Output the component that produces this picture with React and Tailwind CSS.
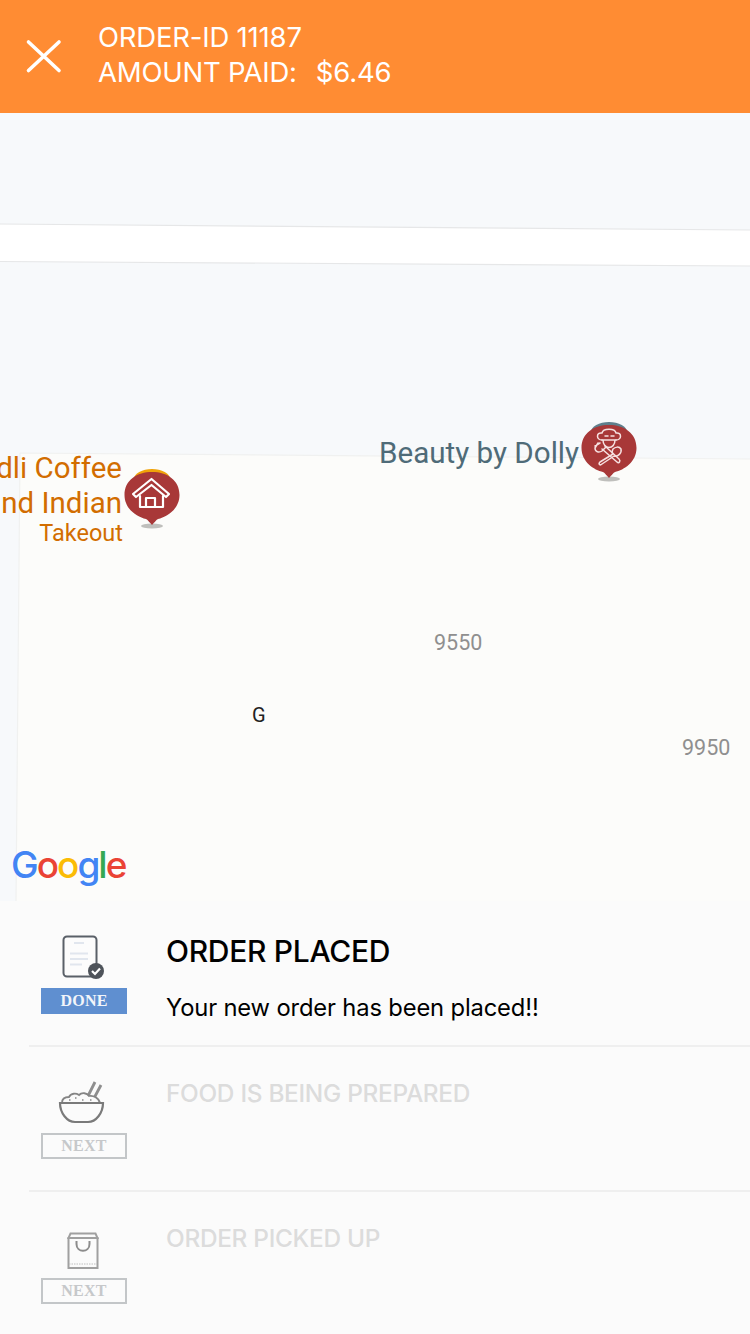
const sans = { fontFamily: 'Inter, Lato, sans-serif' };
const map = { fontFamily: 'Roboto, sans-serif' };

function Pin({ top, children }) {
  return (
    <svg width="58" height="62" viewBox="0 0 58 62" className="block">
      <ellipse cx="29" cy="59" rx="11" ry="2.6" fill="#b4b4b0" opacity="0.85" />
      <path d="M11 12 A18 10 0 0 1 47 12 Z" fill={top} />
      <path d="M29 5 C44 5 56.5 13 56.5 28 C56.5 42 44 50 35 52 C33 53 31 56 29 58 C27 56 25 53 23 52 C14 50 1.5 42 1.5 28 C1.5 13 14 5 29 5 Z" fill="#a83838" />
      {children}
    </svg>
  );
}

function GoogleLogo() {
  const parts = [['G', '#4285f4'], ['o', '#ea4335'], ['o', '#fbbc05'], ['g', '#4285f4'], ['l', '#34a853'], ['e', '#ea4335']];
  return (
    <div className="absolute left-[11px] top-[729px] flex text-[37px] leading-[45px] font-medium tracking-[-2px]" style={{ ...sans, textShadow: '0 0 3px #fff' }}>
      {parts.map(([c, col], i) => (
        <span key={i} style={{ color: col }}>{c}</span>
      ))}
    </div>
  );
}

function Badge({ label, done }) {
  return (
    <div
      className={
        'w-[86px] h-[26px] flex items-center justify-center text-[16px] font-bold tracking-[0.2px] ' +
        (done ? 'bg-[#5f8fd0] text-[#f2f5fa]' : 'border-2 border-[#c3c6c8] text-[#c6c8ca]')
      }
      style={{ fontFamily: '"Liberation Serif", serif' }}
    >
      {label}
    </div>
  );
}

function DocIcon() {
  return (
    <svg width="44" height="46" viewBox="0 0 44 46" className="block">
      <rect x="1.5" y="1.5" width="33" height="40" rx="3.5" fill="#fcfcfc" stroke="#5a6068" strokeWidth="2" />
      <path d="M12 8h10M8 18.5h18M8 24h18M8 29.5h12" stroke="#e1e6ee" strokeWidth="2" fill="none" />
      <circle cx="34" cy="36" r="8" fill="#4e535a" />
      <path d="M30 36l3 3 5-5.5" stroke="#fff" strokeWidth="2.2" fill="none" />
    </svg>
  );
}

function BowlIcon() {
  return (
    <svg width="48" height="44" viewBox="0 0 48 44" className="block">
      <path d="M28 20 L37 2 M34 22 L43 5" stroke="#8e8e8e" strokeWidth="2.8" fill="none" />
      <path d="M4 23 C4 18 8 17 11 17 C13 13 18 13 21 15 C24 12 29 13 31 16 C35 15 41 18 42 23" fill="#fbfbfb" stroke="#858585" strokeWidth="1.8" />
      <path d="M2 23 H45 C45 33 38 42 30 42 H17 C9 42 2 33 2 23 Z" fill="#fbfbfb" stroke="#7a7a7a" strokeWidth="2.2" />
      <path d="M11 20h1.5M17 18h1.5M24 20h1.5M32 20h1.5" stroke="#8a8a8a" strokeWidth="1.5" />
    </svg>
  );
}

function BagIcon() {
  return (
    <svg width="32" height="38" viewBox="0 0 32 38" className="block">
      <path d="M3.5 1.5 H28.5 L30.5 6 H1.5 Z" fill="#fbfbfb" stroke="#a0a0a0" strokeWidth="2" />
      <rect x="1.5" y="6" width="29" height="30" fill="#fbfbfb" stroke="#a0a0a0" strokeWidth="2" />
      <path d="M9.5 9 V12 C9.5 21 22.5 21 22.5 12 V9" fill="none" stroke="#8c8c8c" strokeWidth="2" />
      <path d="M2 32 H30" stroke="#c0c0c0" strokeWidth="1.2" strokeDasharray="1.5 1" />
    </svg>
  );
}

function Row({ icon, iconClass, label, done, title, text, rowClass, titleClass }) {
  return (
    <div className={'ml-[29px] flex border-[#efefef] ' + rowClass}>
      <div className="w-[137px] pl-[12px] flex flex-col">
        <div className={iconClass}>{icon}</div>
        <Badge label={label} done={done} />
      </div>
      <div className="flex-1">
        <div className={titleClass} style={sans}>
          {title}
        </div>
        {text && (
          <div className="mt-[25px] text-[23.75px] leading-[30px] text-black tracking-[-0.15px]" style={sans}>
            {text}
          </div>
        )}
      </div>
    </div>
  );
}

export default function App() {
  const muted = 'text-[24.4px] leading-[30px] text-[#dcdcdc] font-medium tracking-[-0.3px]';
  return (
    <div className="w-[750px] h-[1334px] overflow-hidden bg-[#fbfbfb] flex flex-col">
      <header className="h-[113px] bg-[#ff8c33] flex items-center shrink-0">
        <svg width="98" height="113" viewBox="0 0 98 113" className="shrink-0">
          <path d="M28.5 42 L59 70.5 M59 42 L28.5 70.5" stroke="#fff" strokeWidth="3.6" strokeLinecap="round" fill="none" />
        </svg>
        <div className="text-white text-[27.5px] leading-[35px] mt-[-3px] tracking-[-0.2px]" style={sans}>
          <div>ORDER-ID 11187</div>
          <div className="whitespace-pre">
            AMOUNT PAID:  <span className="ml-[4px]">$6.46</span>
          </div>
        </div>
      </header>

      <div className="relative h-[788px] shrink-0 overflow-hidden bg-[#f7f9fb]">
        <svg width="750" height="788" viewBox="0 0 750 788" className="absolute left-0 top-0">
          <polygon points="0,111 750,117 750,153 0,148.5" fill="#ffffff" />
          <path d="M0 111 L750 117 M0 148.5 L750 153" stroke="#e6e7e8" strokeWidth="1.2" fill="none" />
          <polygon points="20,340 750,346 750,788 16,788" fill="#fcfcfa" />
          <path d="M20 340 L750 346 M20 340 L16 788" stroke="#f0f1f0" strokeWidth="1.2" fill="none" />
        </svg>

        <div className="absolute right-[628px] top-[338px] text-right text-[#d26d00] text-[29.5px] leading-[35px] whitespace-nowrap" style={map}>
          <div>dli Coffee</div>
          <div>nd Indian</div>
        </div>
        <div className="absolute right-[627px] top-[405px] text-[#d26d00] text-[23.5px] leading-[30px]" style={map}>
          Takeout
        </div>
        <div className="absolute left-[123px] top-[354px]">
          <Pin top="#f0a30a">
            <g stroke="#fff" strokeWidth="2.2" fill="none" strokeLinejoin="round" strokeLinecap="round">
              <path d="M10 27 L28.5 12 L46 27 L43 30 L28.5 18 L13 30 Z" />
              <path d="M17 29 V40 H40 V29" />
              <path d="M23 40 V31 H32 V40" />
            </g>
          </Pin>
        </div>

        <div className="absolute left-[379px] top-[321px] text-[#4f6b78] text-[29.6px] leading-[38px] whitespace-nowrap" style={map}>
          Beauty by Dolly
        </div>
        <div className="absolute left-[580px] top-[307px]">
          <Pin top="#5f7f8c">
            <g stroke="#f6e0e0" strokeWidth="1.5" fill="none" strokeLinejoin="round" strokeLinecap="round">
              <path d="M22 20 C16 20 16 12 22 13 C23 8 35 8 36 13 C42 12 42 20 36 20" />
              <path d="M22 20 H36 M23 20 C23 30 35 30 35 20" />
              <path d="M25 16h3M31 16h3" />
              <path d="M22 29 L37 42 C39 44 41 41 39 39 L25 26" />
              <path d="M18 23 L15 28 C15 32 19 33 22 31 L26 27 M15 26 L20 23" />
              <path d="M33 34 L20 42 C18 44 20 46 22 44 L34 36 C38 37 42 33 41 29 C39 26 35 27 33 29 C32 31 32 33 33 34 Z" />
            </g>
          </Pin>
        </div>

        <div className="absolute left-[434px] top-[516px] text-[#8f8f8f] text-[21.5px] leading-[27px]" style={map}>9550</div>
        <div className="absolute left-[682px] top-[621px] text-[#8f8f8f] text-[21.5px] leading-[27px]" style={map}>9950</div>
        <div className="absolute left-[252px] top-[590px] text-[#222] text-[20px] leading-[24px]" style={map}>G</div>

        <GoogleLogo />
      </div>

      <div className="flex-1">
        <Row
          rowClass="h-[146px] border-b-2"
          titleClass="pt-[33px] text-[30px] leading-[34px] text-black font-medium tracking-[-0.3px]"
          done
          label="DONE"
          title="ORDER PLACED"
          text="Your new order has been placed!!"
          icon={<DocIcon />}
          iconClass="h-[87px] pt-[34px] pl-[21px]"
        />
        <Row
          rowClass="h-[145px] border-b-2"
          titleClass={'pt-[31px] ' + muted}
          label="NEXT"
          title="FOOD IS BEING PREPARED"
          icon={<BowlIcon />}
          iconClass="h-[86px] pt-[33px] pl-[17px]"
        />
        <Row
          rowClass="h-[143px]"
          titleClass={'pt-[31px] ' + muted}
          label="NEXT"
          title="ORDER PICKED UP"
          icon={<BagIcon />}
          iconClass="h-[86px] pt-[40px] pl-[26px]"
        />
      </div>
    </div>
  );
}
